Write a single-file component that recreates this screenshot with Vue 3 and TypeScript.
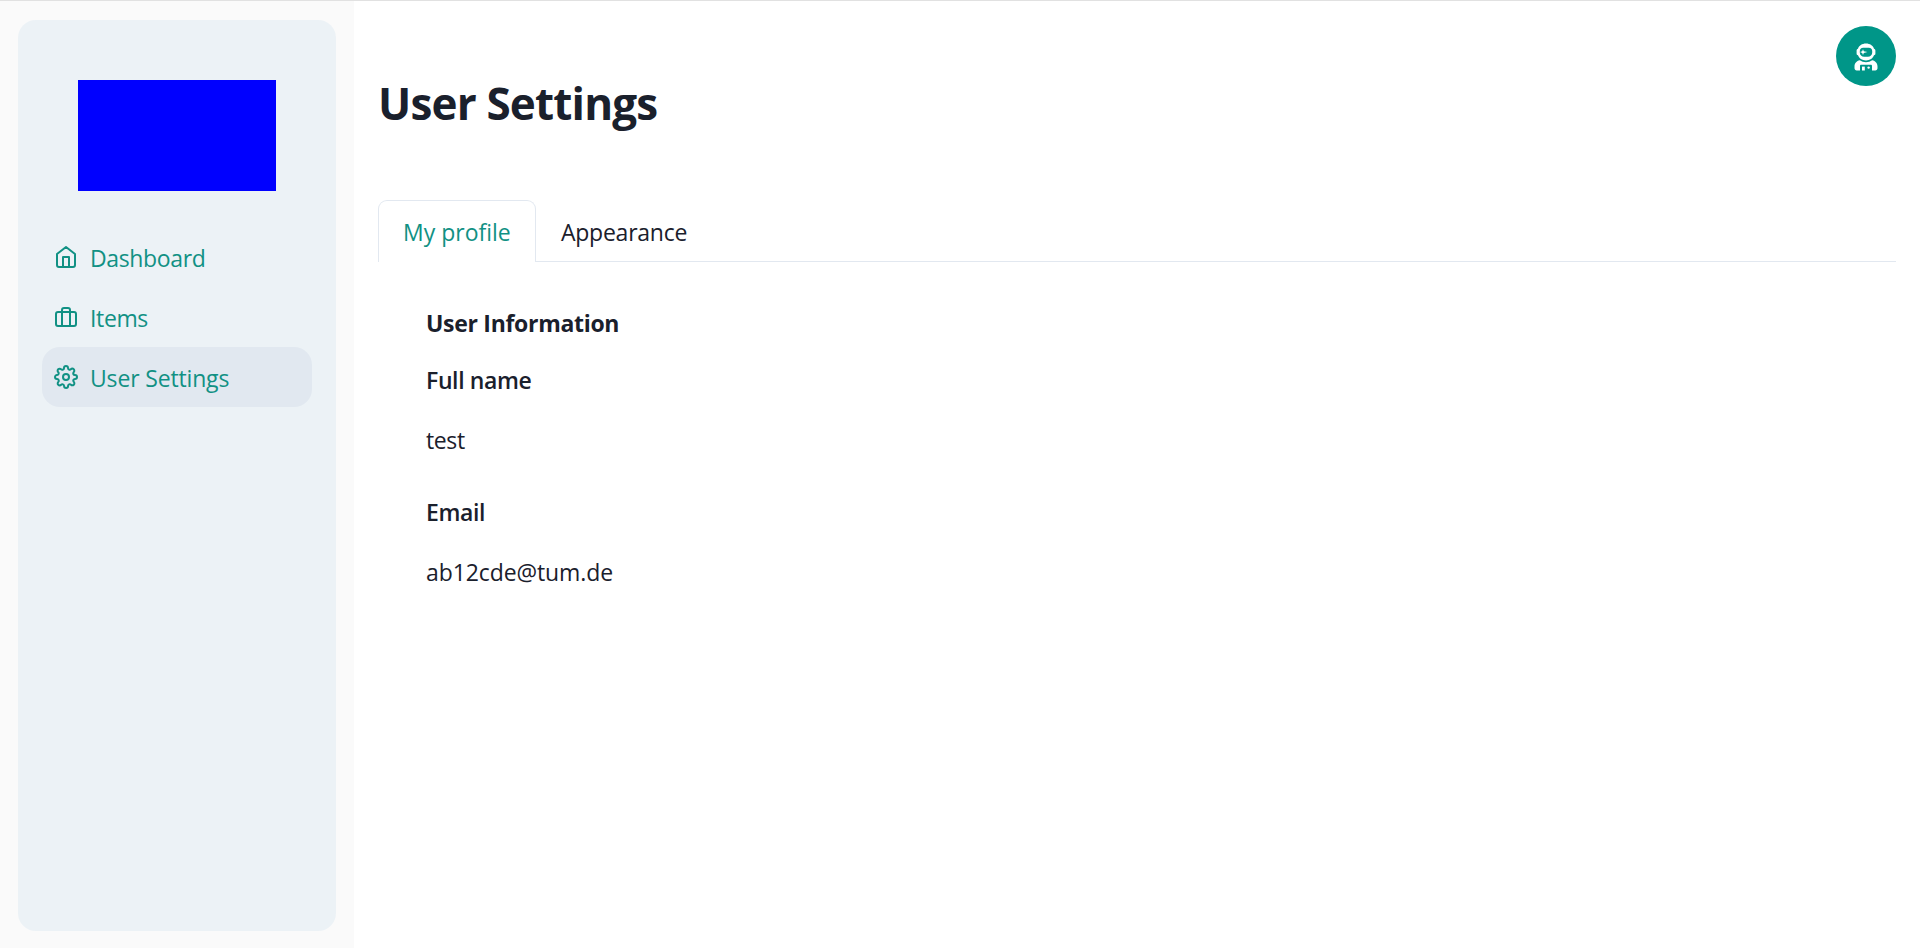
<script setup lang="ts">
import { ref } from 'vue'

interface NavItem {
  label: string
  icon: 'home' | 'briefcase' | 'settings'
}

const navItems: NavItem[] = [
  { label: 'Dashboard', icon: 'home' },
  { label: 'Items', icon: 'briefcase' },
  { label: 'User Settings', icon: 'settings' },
]
const activeNav = ref('User Settings')

const tabs = ['My profile', 'Appearance']
const activeTab = ref('My profile')
</script>

<template>
  <div class="page">
    <aside class="sidebar">
      <div class="panel">
        <div class="logo"></div>
        <nav class="nav">
          <a
            v-for="item in navItems"
            :key="item.label"
            class="nav-item"
            :class="[item.icon, { active: item.label === activeNav }]"
            @click="activeNav = item.label"
          >
            <svg class="nav-icon" viewBox="0 0 24 24">
              <template v-if="item.icon === 'home'">
                <path d="M3 9l9-7 9 7v11a2 2 0 0 1-2 2H5a2 2 0 0 1-2-2z" />
                <polyline points="9 22 9 12 15 12 15 22" />
              </template>
              <template v-else-if="item.icon === 'briefcase'">
                <rect x="2" y="7" width="20" height="14" rx="2" ry="2" />
                <path d="M16 21V5a2 2 0 0 0-2-2h-4a2 2 0 0 0-2 2v16" />
              </template>
              <template v-else>
                <circle cx="12" cy="12" r="3" />
                <path
                  d="M19.4 15a1.65 1.65 0 0 0 .33 1.82l.06.06a2 2 0 0 1 0 2.83 2 2 0 0 1-2.83 0l-.06-.06a1.65 1.65 0 0 0-1.82-.33 1.65 1.65 0 0 0-1 1.51V21a2 2 0 0 1-2 2 2 2 0 0 1-2-2v-.09A1.65 1.65 0 0 0 9 19.4a1.65 1.65 0 0 0-1.82.33l-.06.06a2 2 0 0 1-2.83 0 2 2 0 0 1 0-2.83l.06-.06a1.65 1.65 0 0 0 .33-1.82 1.65 1.65 0 0 0-1.51-1H3a2 2 0 0 1-2-2 2 2 0 0 1 2-2h.09A1.65 1.65 0 0 0 4.6 9a1.65 1.65 0 0 0-.33-1.82l-.06-.06a2 2 0 0 1 0-2.83 2 2 0 0 1 2.83 0l.06.06a1.65 1.65 0 0 0 1.82.33H9a1.65 1.65 0 0 0 1-1.51V3a2 2 0 0 1 2-2 2 2 0 0 1 2 2v.09a1.65 1.65 0 0 0 1 1.51 1.65 1.65 0 0 0 1.82-.33l.06-.06a2 2 0 0 1 2.83 0 2 2 0 0 1 0 2.83l-.06.06a1.65 1.65 0 0 0-.33 1.82V9a1.65 1.65 0 0 0 1.51 1H21a2 2 0 0 1 2 2 2 2 0 0 1-2 2h-.09a1.65 1.65 0 0 0-1.51 1z"
                />
              </template>
            </svg>
            <span>{{ item.label }}</span>
          </a>
        </nav>
      </div>
    </aside>

    <main class="content">
      <h1 class="title">User Settings</h1>
      <div class="tabs">
        <button
          v-for="tab in tabs"
          :key="tab"
          class="tab"
          :class="{ selected: tab === activeTab }"
          @click="activeTab = tab"
        >
          {{ tab }}
        </button>
      </div>
      <section class="profile">
        <h2 class="heading">User Information</h2>
        <div class="label">Full name</div>
        <div class="value name">test</div>
        <div class="label second">Email</div>
        <div class="value email">ab12cde@tum.de</div>
      </section>
    </main>

    <button class="avatar" aria-label="Account">
      <svg viewBox="0 0 24 28">
        <path
          fill="#fff"
          fill-rule="evenodd"
          d="M12 0.5c-4 0-7 2.2-8 5.2-1 .3-1.4 1-1.4 1.8v3c0 .9.5 1.6 1.4 1.8 1 3 4 5.2 8 5.2s7-2.2 8-5.2c.9-.2 1.4-.9 1.4-1.8v-3c0-.8-.5-1.5-1.4-1.8-1-3-4-5.2-8-5.200zM9.300 4.800h5.400a3.500 3.500 0 0 1 3.500 3.500v1.200a4.300 4.300 0 0 1-4.300 4.300h-3.800a4.300 4.300 0 0 1-4.300-4.300v-1.200a3.500 3.500 0 0 1 3.500-3.500z"
        />
        <path fill="#fff" d="M9 6.300l.8 2 3.600.8-3.600.8L9 11.900l-.8-2L6 9.100l2.200-.8z" />
        <path
          fill="#fff"
          d="M5.800 17.300c1.800 1.300 3.900 2 6.200 2s4.400-.7 6.200-2c3.300.5 5.300 3.200 5.300 6.200v1.800c0 1.200-.9 2.200-2.200 2.200H18V23c0-.8-.5-1.200-1.200-1.200H7.200c-.7 0-1.200.4-1.200 1.200v4.500H2.700C1.400 27.500.5 26.500.5 25.300v-1.800c0-3 2-5.700 5.300-6.200z"
        />
        <path fill="#fff" d="M8 23.600h2.800v3.900H8z" />
        <circle cx="14.600" cy="24.600" r="1.200" fill="#fff" />
      </svg>
    </button>
  </div>
</template>

<style>
body {
  margin: 0;
}
</style>

<style scoped>
.page {
  position: relative;
  box-sizing: border-box;
  height: 948px;
  display: flex;
  overflow: hidden;
  background: #fff;
  border-top: 1px solid #e1e1e1;
  color: #1a202c;
  font-family: "Open Sans", "Noto Sans", sans-serif;
  font-size: 23px;
  line-height: 36px;
  letter-spacing: -0.37px;
}
.sidebar {
  box-sizing: border-box;
  width: 354px;
  padding: 19px 18px 17px;
  background: #fafafa;
  flex: none;
}
.panel {
  box-sizing: border-box;
  height: 911px;
  padding: 60px 24px;
  border-radius: 18px;
  background: #ecf2f6;
}
.logo {
  width: 198px;
  height: 111px;
  margin: 0 36px 36px;
  background: #00f;
}
.nav-item {
  box-sizing: border-box;
  display: flex;
  align-items: center;
  gap: 12px;
  height: 60px;
  padding: 0 12px;
  border-radius: 18px;
  color: #119184;
  cursor: pointer;
}
.nav-item span {
  margin-top: 1px;
}
.nav-item.settings {
  letter-spacing: -0.16px;
}
.nav-item.active {
  background: #e1e8f0;
}
.nav-icon {
  width: 24px;
  height: 24px;
  fill: none;
  stroke: currentColor;
  stroke-width: 2;
  stroke-linecap: round;
  stroke-linejoin: round;
}
.content {
  flex: 1;
  padding: 75px 24px 0;
}
.title {
  margin: 0;
  height: 54px;
  font-size: 44px;
  line-height: 54px;
  font-weight: 700;
  letter-spacing: -0.82px;
}
.tabs {
  display: flex;
  margin-top: 70px;
  height: 61px;
  border-bottom: 1px solid #e2e8f0;
}
.tab {
  box-sizing: border-box;
  height: 62px;
  padding: 1px 24px 0;
  border: 1px solid transparent;
  border-bottom: 0;
  border-radius: 9px 9px 0 0;
  background: transparent;
  color: inherit;
  font: inherit;
  text-align: left;
  white-space: nowrap;
  letter-spacing: -0.25px;
}
.tab.selected {
  width: 158px;
  background: #fff;
  border-color: #e2e8f0;
  color: #119184;
  letter-spacing: 0;
}
.profile {
  padding: 43px 48px;
}
.heading {
  margin: 0 0 21px;
  font-size: 23px;
  line-height: 36px;
  font-weight: 700;
  letter-spacing: -0.3px;
}
.label {
  font-weight: 600;
}
.value {
  margin-top: 24px;
}
.email {
  letter-spacing: -0.1px;
}
.second {
  margin-top: 36px;
}
.avatar {
  position: absolute;
  top: 25px;
  right: 24px;
  width: 60px;
  height: 60px;
  padding: 0;
  display: flex;
  align-items: center;
  justify-content: center;
  border: 0;
  border-radius: 50%;
  background: #009688;
}
.avatar svg {
  width: 24px;
  height: 28px;
  margin-top: 2px;
}
</style>
